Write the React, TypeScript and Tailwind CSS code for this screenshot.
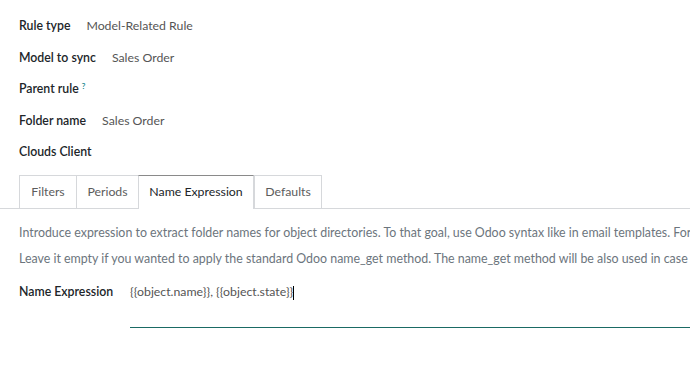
import React from "react"

const fields = [
  { label: "Rule type", value: "Model-Related Rule" },
  { label: "Model to sync", value: "Sales Order" },
  { label: "Parent rule", value: "", help: true },
  { label: "Folder name", value: "Sales Order" },
  { label: "Clouds Client", value: "" },
]

const tabs = [
  { name: "Filters", width: "w-[57px]" },
  { name: "Periods", width: "w-[62px]" },
  { name: "Name Expression", width: "w-[116px]" },
  { name: "Defaults", width: "w-[68px]" },
]

export default function App() {
  return (
    <div className="w-[690px] h-[377px] overflow-hidden bg-white text-[12.3px] text-[#212529]" style={{ fontFamily: "Lato, 'Open Sans', sans-serif" }}>
      <div className="px-[19px] pt-[17px] flex flex-col gap-[11.5px]">
        {fields.map((f) => (
          <div key={f.label} className="flex items-baseline h-[20px] gap-[16px]">
            <span className="font-semibold">
              {f.label}
              {f.help && <sup className="ml-[3px] text-[8px] text-[#017e84]">?</sup>}
            </span>
            {f.value && <span className="text-[#555]">{f.value}</span>}
          </div>
        ))}
      </div>

      {/* notebook tabs */}
      <div className="mt-[12px] border-b border-[#d6d8db] flex pl-[19px]">
        {tabs.map((t) => (
          <div
            key={t.name}
            className={
              t.name === "Name Expression"
                ? `${t.width} h-[34px] flex items-center justify-center border border-b-0 border-[#d6d8db] border-t-[#8a8a8a] bg-white -mb-px text-[#212529]`
                : `${t.width} h-[33px] flex items-center justify-center border border-r-0 border-[#d6d8db] border-b-0 text-[#5c5c5c] last:border-r`
            }
          >
            {t.name}
          </div>
        ))}
      </div>

      <div className="pl-[19px] pt-[15px] whitespace-nowrap text-[#6c757d] text-[12.4px]">
        <p className="leading-[18px]">
          Introduce expression to extract folder names for object directories. To that goal, use Odoo syntax like in email templates. For example, {"{{object.name}}"}
        </p>
        <p className="mt-[8px] leading-[18px]">
          Leave it empty if you wanted to apply the standard Odoo name_get method. The name_get method will be also used in case the expression is not defined
        </p>
      </div>

      <div className="pl-[19px] pt-[15px] flex">
        <span className="font-semibold w-[111px] shrink-0">Name Expression</span>
        <div className="flex-1 border-b border-[#1a6a64] h-[45px] text-[#555]">
          {"{{object.name}}, {{object.state}}"}
          <span className="inline-block w-px h-[14px] bg-black align-middle"></span>
        </div>
      </div>
    </div>
  )
}
